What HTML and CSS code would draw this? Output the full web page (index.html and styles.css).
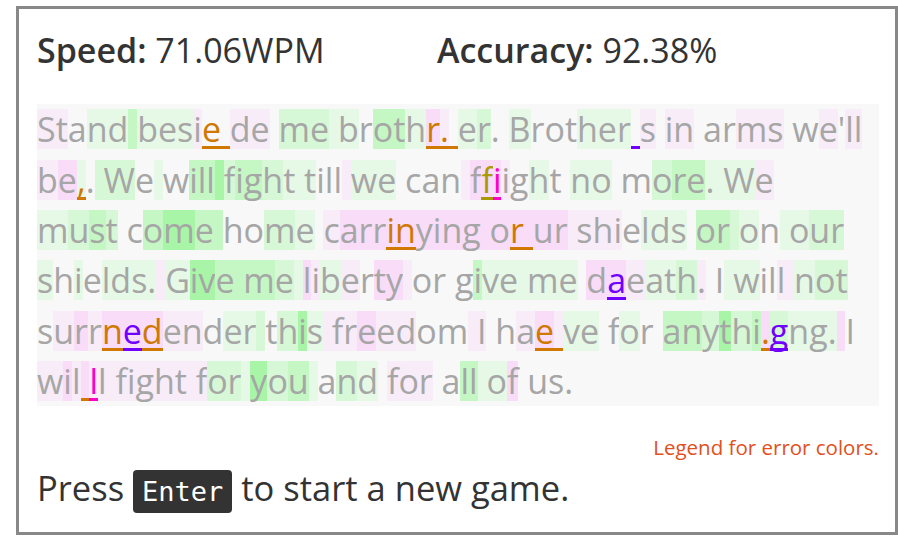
FILE: index.html
```html
<!DOCTYPE html>
<html lang="en">
<head>
<meta charset="utf-8">
<title>Typing game</title>
<link rel="stylesheet" href="styles.css">
</head>
<body>
<div class="game">
  <div class="stats">
    <div class="stat"><b>Speed:</b> 71.06WPM</div>
    <div class="stat"><b>Accuracy:</b> 92.38%</div>
  </div>
  <div class="passage">
    <div class="line"><span class="p">St</span>a<span class="a">nd</span><span class="c"> </span><span class="a">bes</span><span class="p">i</span><span class="eo">e </span><span class="p">de</span> <span class="b">me</span><span class="a"> b</span>r<span class="c">ot</span><span class="a">h</span><span class="q eo">r</span><span class="p eo">.</span><span class="eo"> </span><span class="a">e</span><span class="b">r</span>. <span class="a">B</span>rot<span class="a">her</span><span class="ev"> </span><span class="p">s</span> <span class="p">in</span> ar<span class="p">ms</span> w<span class="p">e</span>'<span class="p">ll</span></div>
    <div class="line"><span class="p">b</span><span class="q">e</span><span class="a eo">,</span>.<span class="b"> W</span>e<span class="a"> </span>w<span class="c">ill</span><span class="d"> </span><span class="b">f</span><span class="c">ig</span><span class="b">h</span><span class="a">t t</span>ill<span class="p"> </span><span class="a">we</span> can<span class="p"> </span><span class="q">f</span><span class="q ey">f</span><span class="q em">i</span><span class="p">i</span>g<span class="a">h</span>t <span class="a">no</span> m<span class="b">o</span><span class="c">re</span><span class="a">. W</span><span class="p">e</span></div>
    <div class="line"><span class="a">m</span><span class="b">u</span><span class="c">s</span><span class="b">t</span> c<span class="c">o</span><span class="d">m</span><span class="c">e </span>ho<span class="b">m</span><span class="a">e</span> <span class="p">c</span><span class="q">arr</span><span class="q eo">in</span><span class="q">ying o</span><span class="q eo">r </span><span class="q">ur</span><span class="p"> shi</span>e<span class="a">lds</span> <span class="c">or</span><span class="b"> </span><span class="a">o</span>n<span class="a"> o</span><span class="b">ur</span></div>
    <div class="line"><span class="a">s</span>h<span class="a">i</span>e<span class="a">lds.</span><span class="p"> </span><span class="a">G</span><span class="d">iv</span><span class="c">e m</span><span class="b">e</span><span class="a"> </span><span class="q">l</span><span class="p">i</span><span class="a">b</span><span class="p">e</span>r<span class="q">ty</span><span class="p"> </span>or g<span class="c">i</span><span class="a">ve me</span> <span class="q">d</span><span class="q ev">a</span><span class="p">e</span><span class="a">at</span><span class="b">h</span><span class="p">.</span> I<span class="a"> w</span>il<span class="p">l </span><span class="a">n</span><span class="b">ot</span></div>
    <div class="line">s<span class="p">u</span><span class="q">r</span><span class="p">r</span><span class="q eo">n</span><span class="q ev">e</span><span class="q eo">d</span><span class="p">en</span>d<span class="a">er</span><span class="b"> </span>t<span class="b">h</span><span class="d">i</span><span class="a">s</span><span class="p"> fr</span><span class="q">e</span><span class="p">ed</span>om<span class="p"> I</span> h<span class="p">a</span><span class="q eo">e</span><span class="p eo"> </span><span class="a">ve</span> f<span class="a">o</span>r <span class="c">an</span><span class="b">y</span><span class="d">t</span><span class="b">h</span><span class="c">i</span><span class="q eo">.</span><span class="b ev">g</span><span class="a">ng.</span><span class="q"> </span>I</div>
    <div class="line"><span class="p">w</span><span class="q">i</span><span class="p">l</span><span class="q eo"> </span><span class="p em">l</span><span class="p">l fight f</span><span class="b">or</span><span class="a"> </span><span class="d">y</span><span class="b">o</span><span class="c">u</span><span class="a"> </span>a<span class="b">n</span><span class="a">d</span> <span class="p">for</span> a<span class="c">ll</span><span class="a"> o</span><span class="q">f</span> us.</div>
  </div>
  <div class="legend">Legend for error colors.</div>
  <div class="prompt">Press <kbd>Enter</kbd> to start a new game.</div>
</div>
</body>
</html>
```

FILE: styles.css
```css
* { box-sizing: border-box; }
html, body { background: #fff; }
body {
  margin: 6px 0 0 16px;
  font-family: "Open Sans", "Noto Sans", sans-serif;
  color: #333;
}
.game {
  width: 882px;
  height: 529px;
  border: 3px solid #888;
  padding: 21px 16px 0 18px;
}
.stats {
  display: grid;
  grid-template-columns: 400px auto;
  font-size: 34px;
  line-height: 40px;
}
.stats b { font-weight: 600; }
.passage {
  margin-top: 34px;
  background: #f8f8f8;
  color: #a6a6a6;
  font-size: 34px;
}
.line {
  height: 50.4px;
  padding-top: 5.2px;
  line-height: 40px;
  white-space: pre;
}
.line span {
  display: inline-block;
  height: 40px;
  vertical-align: baseline;
}
.a { background: #e6f8e6; }
.b { background: #d6f8d6; }
.c { background: #c4f7c4; }
.d { background: #a8f5a8; }
.p { background: #f8ecf8; }
.q { background: #f8dcf8; }
.eo { color: #d07800; box-shadow: inset 0 -3px 0 #d07800; }
.ev { color: #7000ff; box-shadow: inset 0 -3px 0 #7000ff; }
.em { color: #ff00c8; box-shadow: inset 0 -3px 0 #ff00c8; }
.ey { color: #a89a00; box-shadow: inset 0 -3px 0 #a89a00; }
.legend {
  margin-top: 29px;
  text-align: right;
  font-size: 20.5px;
  line-height: 24px;
  color: #e05020;
}
.prompt {
  margin-top: 7px;
  font-size: 34.5px;
  line-height: 44px;
}
kbd {
  display: inline-block;
  font-family: "DejaVu Sans Mono", monospace;
  font-size: 27px;
  line-height: 43px;
  padding: 0 9px;
  background: #333;
  color: #fff;
  border-radius: 4px;
}
```
